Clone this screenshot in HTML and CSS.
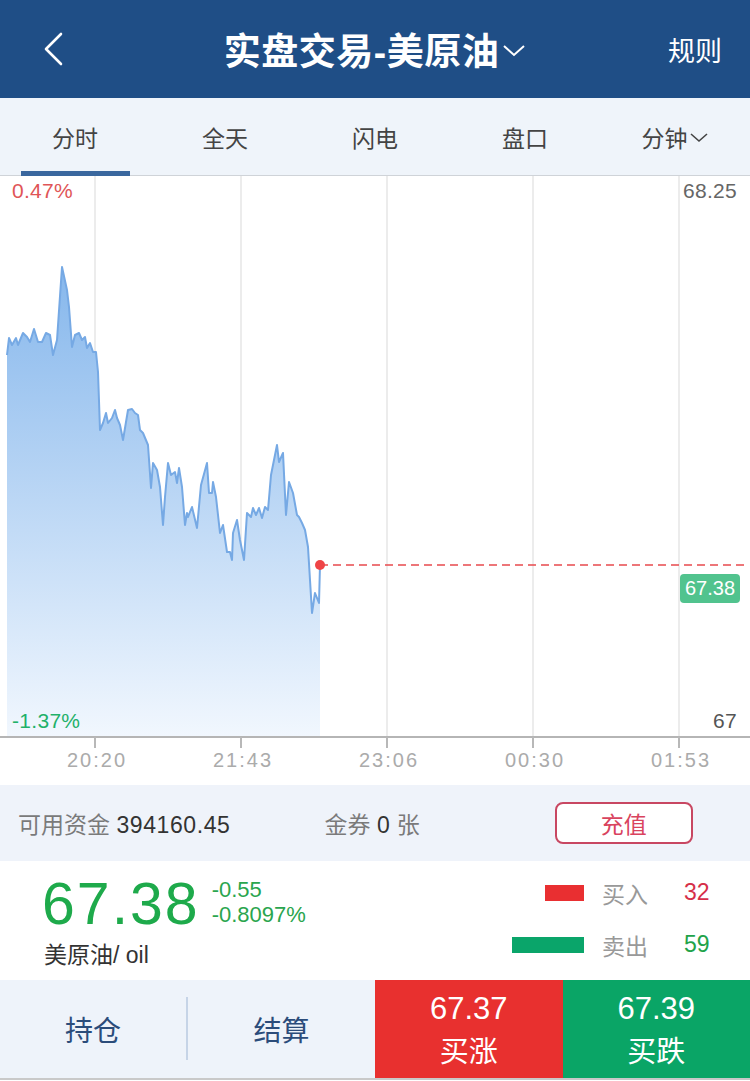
FILE: index.html
```html
<!DOCTYPE html>
<html lang="zh-CN">
<head>
    <meta charset="UTF-8">
    <meta name="viewport" content="width=device-width, initial-scale=1.0">
    <title>实盘交易-美原油</title>
    <link rel="stylesheet" href="styles.css">
</head>
<body>
    <header class="topbar">
        <div class="back">
            <svg width="20" height="34" viewBox="0 0 20 34"><path d="M17 2 L2 17 L17 32" fill="none" stroke="#fff" stroke-width="2.6" stroke-linecap="round" stroke-linejoin="round"/></svg>
        </div>
        <div class="title">实盘交易-美原油<svg class="title-arrow" width="24" height="14" viewBox="0 0 24 14"><path d="M2 2 L12 11 L22 2" fill="none" stroke="#fff" stroke-width="2"/></svg></div>
        <div class="rules">规则</div>
    </header>

    <nav class="tabs">
        <div class="tab active">分时</div>
        <div class="tab">全天</div>
        <div class="tab">闪电</div>
        <div class="tab">盘口</div>
        <div class="tab">分钟<svg width="20" height="12" viewBox="0 0 20 12"><path d="M2 2 L10 9 L18 2" fill="none" stroke="#444" stroke-width="1.6"/></svg></div>
    </nav>

    <section class="chart">
        <svg class="chart-svg" width="750" height="572" viewBox="0 0 750 572">
            <defs>
                <linearGradient id="area" x1="0" y1="0" x2="0" y2="1">
                    <stop offset="0" stop-color="#86b7ec"/>
                    <stop offset="1" stop-color="#f1f7fe"/>
                </linearGradient>
            </defs>
            <g stroke="#e6e6e6" stroke-width="1.5">
                <line x1="95" y1="0" x2="95" y2="560"/>
                <line x1="241" y1="0" x2="241" y2="560"/>
                <line x1="387" y1="0" x2="387" y2="560"/>
                <line x1="533" y1="0" x2="533" y2="560"/>
                <line x1="679" y1="0" x2="679" y2="560"/>
            </g>
            <polygon fill="url(#area)" points="7,560 7,179 9,162 12,169 16,162 18,169 23,157 27,161 30,166 34,153 38,166 42,166 46,157 50,159 53,179 57,164 62,91 67,114 69,131 72,171 75,159 79,157 82,164 85,161 87,172 90,167 93,176 96,176 98,196 100,254 103,247 106,237 108,247 112,242 115,234 117,242 120,249 123,264 128,234 132,233 135,237 138,239 140,254 143,257 148,269 151,312 153,287 157,294 160,311 163,349 165,321 168,287 171,299 175,296 177,307 179,292 182,311 185,349 187,337 188,341 192,331 197,352 201,309 207,287 209,317 212,317 213,306 216,321 220,357 223,349 227,376 230,376 232,384 233,357 237,344 240,364 244,384 247,337 251,341 253,332 256,339 259,332 262,342 265,331 268,334 271,299 277,269 279,286 283,277 286,339 289,306 293,317 297,339 299,341 302,347 305,354 308,371 312,437 315,417 319,427 320,389 320,560"/>
            <polyline fill="none" stroke="#76a9e4" stroke-width="2" stroke-linejoin="round" points="7,179 9,162 12,169 16,162 18,169 23,157 27,161 30,166 34,153 38,166 42,166 46,157 50,159 53,179 57,164 62,91 67,114 69,131 72,171 75,159 79,157 82,164 85,161 87,172 90,167 93,176 96,176 98,196 100,254 103,247 106,237 108,247 112,242 115,234 117,242 120,249 123,264 128,234 132,233 135,237 138,239 140,254 143,257 148,269 151,312 153,287 157,294 160,311 163,349 165,321 168,287 171,299 175,296 177,307 179,292 182,311 185,349 187,337 188,341 192,331 197,352 201,309 207,287 209,317 212,317 213,306 216,321 220,357 223,349 227,376 230,376 232,384 233,357 237,344 240,364 244,384 247,337 251,341 253,332 256,339 259,332 262,342 265,331 268,334 271,299 277,269 279,286 283,277 286,339 289,306 293,317 297,339 299,341 302,347 305,354 308,371 312,437 315,417 319,427 320,389"/>
            <line x1="320" y1="389" x2="746" y2="389" stroke="#e8494d" stroke-width="1.6" stroke-dasharray="8 5"/>
            <circle cx="320" cy="389" r="5" fill="#ef4446"/>
            <line x1="0" y1="561" x2="750" y2="561" stroke="#b5b5b5" stroke-width="2"/>
            <g stroke="#b8b8b8" stroke-width="2">
                <line x1="95" y1="561" x2="95" y2="572"/>
                <line x1="241" y1="561" x2="241" y2="572"/>
                <line x1="387" y1="561" x2="387" y2="572"/>
                <line x1="533" y1="561" x2="533" y2="572"/>
                <line x1="679" y1="561" x2="679" y2="572"/>
            </g>
        </svg>
        <span class="label pct-up">0.47%</span>
        <span class="label price-top">68.25</span>
        <span class="label pct-down">-1.37%</span>
        <span class="label price-bottom">67</span>
        <span class="last-tag">67.38</span>
    </section>

    <div class="times">
        <span>20:20</span>
        <span>21:43</span>
        <span>23:06</span>
        <span>00:30</span>
        <span>01:53</span>
    </div>

    <div class="funds">
        <div class="fund-item">可用资金 <b>394160.45</b></div>
        <div class="fund-item coupon">金券 <b>0</b> 张</div>
        <div class="recharge">充值</div>
    </div>

    <section class="quote">
        <div class="quote-left">
            <div class="quote-main">
                <span class="last">67.38</span>
                <div class="change">
                    <span>-0.55</span>
                    <span>-0.8097%</span>
                </div>
            </div>
            <div class="name">美原油/ oil</div>
        </div>
        <div class="depth">
            <div class="depth-row">
                <span class="bar bar-buy"></span>
                <span class="depth-label">买入</span>
                <span class="depth-num up">32</span>
            </div>
            <div class="depth-row">
                <span class="bar bar-sell"></span>
                <span class="depth-label">卖出</span>
                <span class="depth-num down">59</span>
            </div>
        </div>
    </section>

    <footer class="actions">
        <div class="action-link">持仓</div>
        <div class="action-sep"></div>
        <div class="action-link">结算</div>
        <div class="trade trade-up">
            <span class="trade-price">67.37</span>
            <span class="trade-name">买涨</span>
        </div>
        <div class="trade trade-down">
            <span class="trade-price">67.39</span>
            <span class="trade-name">买跌</span>
        </div>
    </footer>
</body>
</html>
```

FILE: styles.css
```css
body {
    font-family: "Liberation Sans", "Noto Sans CJK SC", sans-serif;
    margin: 0;
    width: 750px;
    background-color: #fff;
    color: #333;
}
.topbar {
    height: 98px;
    background-color: #1f4e86;
    display: grid;
    grid-template-columns: 1fr auto 1fr;
    align-items: center;
    color: #fff;
}
.back {
    padding-left: 44px;
    display: flex;
    align-items: center;
}
.title {
    font-size: 37px;
    font-weight: bold;
    display: flex;
    align-items: center;
    letter-spacing: 0.5px;
}
.title-arrow {
    margin-left: 3px;
    margin-top: 4px;
}
.rules {
    justify-self: end;
    padding-right: 28px;
    font-size: 27px;
}
.tabs {
    height: 77px;
    display: flex;
    background-color: #eff4fa;
    border-bottom: 1px solid #cfd3d8;
}
.tab {
    flex: 1;
    display: flex;
    justify-content: center;
    align-items: center;
    font-size: 23px;
    color: #444;
    position: relative;
}
.tab svg {
    margin-left: 1px;
    margin-top: 2px;
}
.tab.active::after {
    content: "";
    position: absolute;
    left: 21px;
    right: 20px;
    bottom: -1px;
    height: 5px;
    background-color: #3a679e;
}
.chart {
    position: relative;
    height: 572px;
}
.chart-svg {
    display: block;
}
.label {
    position: absolute;
    font-size: 21px;
    line-height: 24px;
    letter-spacing: 0.3px;
}
.pct-up {
    left: 12px;
    top: 3px;
    color: #e05557;
}
.price-top {
    right: 13px;
    top: 3px;
    color: #666;
}
.pct-down {
    left: 12px;
    top: 533px;
    color: #1fb16a;
}
.price-bottom {
    right: 13px;
    top: 533px;
    color: #555;
}
.last-tag {
    position: absolute;
    right: 10px;
    top: 398px;
    width: 60px;
    height: 29px;
    line-height: 29px;
    text-align: center;
    border-radius: 4px;
    background-color: #51c38e;
    color: #fff;
    font-size: 20px;
}
.times {
    display: grid;
    grid-template-columns: repeat(5, 146px);
    padding-left: 24px;
    padding-top: 1px;
    height: 36px;
    line-height: 22px;
    font-size: 20px;
    letter-spacing: 2px;
    color: #ababab;
}
.times span {
    text-align: center;
}
.funds {
    height: 76px;
    background-color: #eff3fa;
    display: flex;
    align-items: center;
    padding-left: 18px;
    font-size: 23px;
    color: #7a7a7a;
}
.funds b {
    font-weight: normal;
    color: #333;
    letter-spacing: 0.6px;
}
.coupon {
    margin-left: 94px;
}
.recharge {
    margin-left: 135px;
    width: 134px;
    height: 38px;
    border: 2px solid #c84762;
    border-radius: 8px;
    background-color: #fff;
    color: #d9435e;
    display: flex;
    justify-content: center;
    align-items: center;
}
.quote {
    height: 119px;
    display: flex;
    justify-content: space-between;
    align-items: center;
}
.quote-left {
    padding-left: 42px;
    padding-top: 2px;
}
.quote-main {
    display: flex;
    align-items: center;
}
.last {
    font-size: 59px;
    line-height: 60px;
    color: #1eaa4b;
    letter-spacing: 2px;
}
.change {
    display: flex;
    flex-direction: column;
    margin-left: 12px;
    margin-top: -4px;
    font-size: 22px;
    line-height: 25px;
    color: #2aa54e;
}
.name {
    margin-top: 2px;
    padding-left: 2px;
    font-size: 23px;
    color: #333;
}
.depth {
    display: flex;
    flex-direction: column;
    gap: 28px;
    padding-right: 40px;
    margin-top: -4px;
}
.depth-row {
    display: flex;
    align-items: center;
    justify-content: flex-end;
    height: 24px;
}
.bar {
    height: 16px;
}
.bar-buy {
    width: 39px;
    background-color: #e92f31;
}
.bar-sell {
    width: 72px;
    background-color: #0aa56a;
}
.depth-label {
    margin-left: 18px;
    width: 82px;
    font-size: 23px;
    color: #999;
}
.depth-num {
    width: 26px;
    font-size: 23px;
}
.up {
    color: #d62f49;
}
.down {
    color: #22a34a;
}
.actions {
    height: 98px;
    display: flex;
    align-items: stretch;
    background-color: #eef3fa;
    border-bottom: 2px solid #c9c9c9;
}
.action-link {
    width: 186px;
    display: flex;
    justify-content: center;
    align-items: center;
    font-size: 28px;
    color: #2b4c7a;
}
.action-sep {
    width: 2px;
    margin: 17px 0 18px;
    background-color: #c6d4e7;
}
.action-sep + .action-link {
    width: 187px;
}
.trade {
    flex: 1;
    display: flex;
    flex-direction: column;
    align-items: center;
    justify-content: center;
    padding-top: 6px;
    color: #fff;
}
.trade-up {
    background-color: #e8302f;
}
.trade-down {
    background-color: #0aa566;
}
.trade-price {
    font-size: 31px;
    line-height: 36px;
}
.trade-name {
    font-size: 29px;
    line-height: 50px;
    margin-bottom: -4px;
}
```
